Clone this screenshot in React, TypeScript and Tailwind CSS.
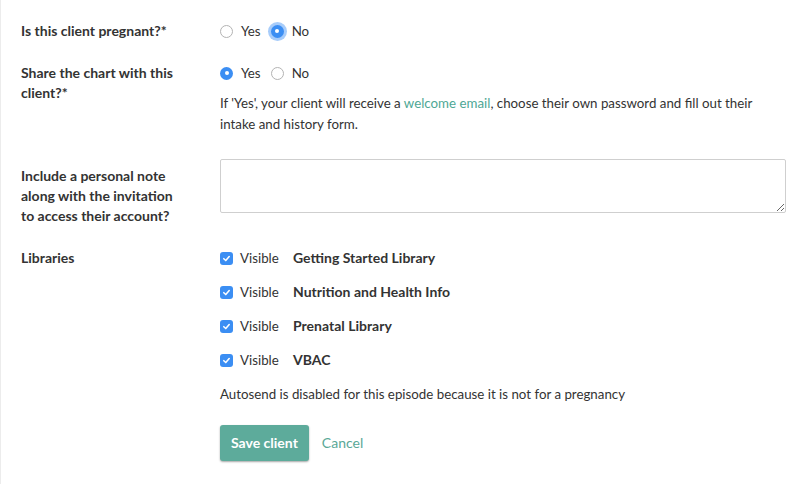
import React from 'react';

function Radio({ checked, focused, label }: { checked?: boolean; focused?: boolean; label: string }) {
  return (
    <label className="flex items-center gap-[8px] cursor-pointer">
      <span
        className={`h-[13px] w-[13px] rounded-full flex items-center justify-center ${
          checked ? 'bg-[#3b8ef3]' : 'bg-white border border-[#b3b3b3]'
        } ${focused ? 'shadow-[0_0_0_3px_rgba(59,142,243,0.45)]' : ''}`}
      >
        {checked && <span className="h-[4px] w-[4px] rounded-full bg-white" />}
      </span>
      <span>{label}</span>
    </label>
  );
}

function Check({ name }: { name: string }) {
  return (
    <div className="flex items-center h-[20px]">
      <span className="h-[13px] w-[13px] rounded-[3px] bg-[#3b8ef3] flex items-center justify-center">
        <svg width="9" height="9" viewBox="0 0 10 10" fill="none">
          <path d="M2 5.2 L4.2 7.3 L8 2.8" stroke="white" strokeWidth="1.7" strokeLinecap="round" strokeLinejoin="round" />
        </svg>
      </span>
      <span className="ml-[7px] w-[53px]">Visible</span>
      <span className="font-bold text-[14px]">{name}</span>
    </div>
  );
}

export default function App() {
  const libraries = ['Getting Started Library', 'Nutrition and Health Info', 'Prenatal Library', 'VBAC'];

  return (
    <div
      className="min-h-[484px] w-[805px] bg-white border-l border-[#ececec] text-[#333] text-[13.3px] leading-[20px] pl-[20px] pr-[19px] pt-[21px]"
      style={{ fontFamily: 'Lato, "Open Sans", sans-serif' }}
    >
      {/* Pregnant */}
      <div className="grid grid-cols-[199px_1fr]">
        <div className="font-bold text-[14px]">Is this client pregnant?*</div>
        <div className="flex items-center gap-[10px]">
          <Radio label="Yes" />
          <Radio label="No" checked focused />
        </div>
      </div>

      {/* Share chart */}
      <div className="grid grid-cols-[199px_1fr] mt-[22px]">
        <div className="font-bold text-[14px] pr-[34px]">Share the chart with this client?*</div>
        <div>
          <div className="flex items-center gap-[10px]">
            <Radio label="Yes" checked />
            <Radio label="No" />
          </div>
          <p className="mt-[10px] leading-[21px]">
            If 'Yes', your client will receive a <a className="text-[#4ea795]">welcome email</a>, choose their own
            password and fill out their intake and history form.
          </p>
        </div>
      </div>

      {/* Personal note */}
      <div className="grid grid-cols-[199px_1fr] mt-[24px]">
        <div className="font-bold text-[14px] pt-[7px] pr-[34px]">
          Include a personal note along with the invitation to access their account?
        </div>
        <div>
          <textarea className="block w-full h-[54px] border border-[#cfcfcf] rounded-[2px] outline-none px-2 py-1" />
        </div>
      </div>

      {/* Libraries */}
      <div className="grid grid-cols-[199px_1fr] mt-[22px]">
        <div className="font-bold text-[14px]">Libraries</div>
        <div>
          <div className="flex flex-col gap-[14px]">
            {libraries.map((l) => (
              <Check key={l} name={l} />
            ))}
          </div>
          <p className="mt-[14px]">Autosend is disabled for this episode because it is not for a pregnancy</p>
          <div className="flex items-center mt-[21px] gap-[13px]">
            <button className="h-[36px] px-[11px] rounded-[3px] bg-[#5dab9b] text-white font-bold text-[14px] shadow-[0_1px_2px_rgba(0,0,0,0.35)]">
              Save client
            </button>
            <a className="text-[#5aa897] text-[14px]">Cancel</a>
          </div>
        </div>
      </div>
    </div>
  );
}
